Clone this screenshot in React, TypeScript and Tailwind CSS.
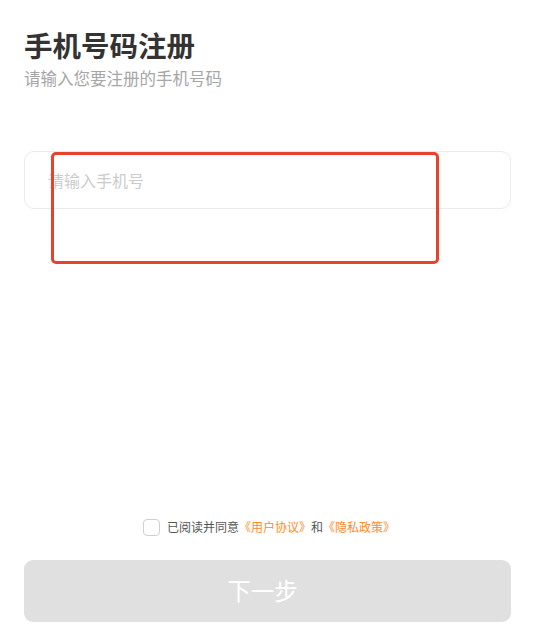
import React from "react";

export default function App() {
  const font = { fontFamily: '"Noto Sans CJK SC", "Noto Sans", sans-serif' };
  return (
    <div className="relative w-[535px] h-[628px] bg-white overflow-hidden" style={font}>
      <div className="flex flex-col h-full px-6">
        <h1 className="pt-[27px] text-[28.5px] leading-[36px] font-bold text-[#333333]">手机号码注册</h1>
        <p className="mt-[4px] text-[16.5px] leading-[22px] text-[#a6a6a6]">请输入您要注册的手机号码</p>
        <div className="mt-[62px] h-[58px] rounded-[10px] border border-[#ebebeb] flex items-center pl-[23px]">
          <input
            className="w-full outline-none text-[16px] placeholder:text-[#cccccc] bg-transparent"
            placeholder="请输入手机号"
          />
        </div>
        <div className="flex-1" />
        <div className="flex items-center justify-center gap-[7px] h-[20px] pl-[3px]">
          <span className="w-[17px] h-[17px] rounded-[4px] border border-[#d0d0d0] bg-white" />
          <span className="text-[12px] leading-[20px] text-[#555555]">
            已阅读并同意<span className="text-[#ff8a1f]">《用户协议》</span>和<span className="text-[#ff8a1f]">《隐私政策》</span>
          </span>
        </div>
        <button className="mt-[23px] mb-[6px] h-[62px] rounded-[9px] bg-[#e0e0e0] text-white text-[23.5px] pr-[10px]">
          下一步
        </button>
      </div>
      <div className="absolute left-[51px] top-[152px] w-[388px] h-[112px] border-[3px] border-[#e8412c] rounded-[5px] pointer-events-none" />
    </div>
  );
}
